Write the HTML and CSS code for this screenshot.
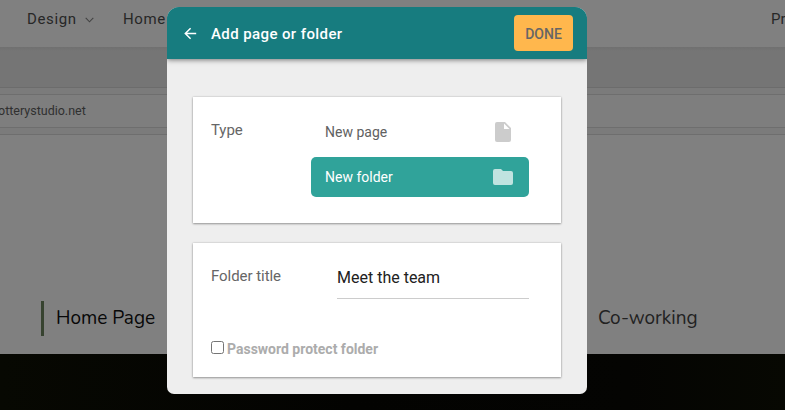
FILE: index.html
```html
<!DOCTYPE html>
<html lang="en">
<head>
<meta charset="utf-8">
<title>Add page or folder</title>
<link rel="stylesheet" href="styles.css">
</head>
<body>
<div class="site">
  <nav class="topbar">
    <span class="topbar-item design">Design
      <svg class="chevron" width="9" height="6" viewBox="0 0 9 6"><path d="M.7.9 4.5 4.8 8.3.9" fill="none" stroke="#424242" stroke-width="1.1"/></svg>
    </span>
    <span class="topbar-item">Home</span>
    <span class="topbar-item preview">Pr</span>
  </nav>
  <div class="toolbar"></div>
  <div class="address"><span>otterystudio.net</span></div>
  <div class="page">
    <span class="page-link current">Home Page</span>
    <span class="page-link coworking">Co-working</span>
  </div>
  <div class="hero"></div>
</div>
<section class="modal">
  <header class="modal-head">
    <svg class="back" width="13" height="13" viewBox="0 0 13 13"><path d="M12.2 6.500H1.300M6.600 1.200 1.300 6.500 6.600 11.800" fill="none" stroke="#fff" stroke-width="1.500"/></svg>
    <h1>Add page or folder</h1>
    <button class="done">DONE</button>
  </header>
  <div class="modal-body">
    <div class="card type-card">
      <span class="label">Type</span>
      <div class="options">
        <div class="option"><span>New page</span>
          <svg width="24" height="24" viewBox="0 0 24 24"><path fill="#ccc" fill-rule="evenodd" d="M6 2h8l6 6v12q0 2-2 2H6q-2 0-2-2V4q0-2 2-2zM13 3.500V9h5.500z"/></svg>
        </div>
        <div class="option selected"><span>New folder</span>
          <svg width="24" height="24" viewBox="0 0 24 24"><path fill="#c0e3e0" d="M10 4H4q-2 0-2 2v12q0 2 2 2h16q2 0 2-2V8q0-2-2-2h-8z"/></svg>
        </div>
      </div>
    </div>
    <div class="card title-card">
      <div class="field">
        <span class="label">Folder title</span>
        <span class="input">Meet the team</span>
      </div>
      <div class="protect"><span class="checkbox"></span><span class="protect-text">Password protect folder</span></div>
    </div>
  </div>
</section>
</body>
</html>
```
FILE: styles.css
```css
* { box-sizing: border-box; }
body { margin: 0; width: 785px; height: 410px; overflow: hidden; position: relative; font-family: Roboto, sans-serif; background: #808080; }
.site { overflow: hidden; }
.topbar { height: 47px; display: flex; align-items: center; padding: 0 0 9px 27px; background: #808080; color: #272727; font-size: 15px; letter-spacing: .65px; white-space: nowrap; }
.design { display: flex; align-items: center; width: 96px; }
.chevron { margin-left: 8px; margin-top: 1px; }
.preview { margin-left: auto; flex: none; width: 14px; letter-spacing: 0; }
.toolbar { height: 48px; background: linear-gradient(#707070 0, #757575 4px, #757575 40px, #6c6c6c 40px, #6c6c6c 41px, #7b7b7b 41px, #7b7b7b 47px, #6e6e6e 47px); }
.address { height: 40px; display: flex; align-items: flex-start; background: linear-gradient(#7e7e7e 32px, #6e6e6e 32px, #6e6e6e 33px, #7b7b7b 33px, #7b7b7b 39px, #6e6e6e 39px); color: #303030; font-size: 12.5px; line-height: 32px; }
.address span { margin-left: -2px; }
.page { height: 219px; display: flex; align-items: flex-end; padding: 0 0 18px 41px; background: #808080; font-family: Nunito, "Open Sans", sans-serif; font-size: 19px; line-height: 35px; white-space: nowrap; }
.current { width: 557px; border-left: 3px solid #374330; padding-left: 12px; color: #080808; }
.coworking { color: #222; }
.hero { height: 56px; background: linear-gradient(90deg, #070802, #030301 45%, #040402 80%, #070802); }
.modal { position: absolute; left: 167px; top: 7px; width: 420px; height: 387px; border-radius: 12px 12px 7px 7px; overflow: hidden; background: #eee; }
.modal-head { position: relative; height: 52px; background: #177c7f; display: flex; align-items: center; padding: 0 14px 0 17px; box-shadow: 0 1px 5px rgba(0,0,0,.5); }
.modal-head h1 { margin: 2px 0 0 14px; color: #fff; font-size: 15px; font-weight: 500; line-height: 20px; letter-spacing: .4px; }
.done { margin-left: auto; width: 59px; height: 36px; padding: 2px 0 0; border: 0; border-radius: 4px; background: #ffb74d; color: #666; font: 500 14px Roboto, sans-serif; }
.modal-body { padding: 38px 26px 0; }
.card { width: 368px; padding: 0 32px 0 18px; background: #fff; box-shadow: 0 0 2px rgba(0,0,0,.2), 0 1px 2px rgba(0,0,0,.32); }
.type-card { height: 126px; display: flex; justify-content: space-between; padding-top: 15px; }
.label { color: #666; font-size: 15px; line-height: 20px; letter-spacing: -.05px; }
.type-card .label { padding-top: 8px; }
.options { width: 218px; }
.option { height: 40px; padding: 0 14px; display: flex; align-items: center; justify-content: space-between; font-size: 14px; color: #616161; border-radius: 5px; }
.option:first-child { margin-bottom: 5px; }
.selected { background: #30a39a; color: #fff; }
.title-card { height: 134px; margin-top: 20px; padding-top: 19px; }
.field { display: flex; justify-content: space-between; }
.field .label { padding-top: 4px; }
.input { width: 192px; height: 37px; border-bottom: 1px solid #ccc; color: #212121; font-size: 16px; line-height: 31px; }
.protect { display: flex; align-items: center; margin-top: 42px; height: 16px; }
.checkbox { width: 13px; height: 13px; border: 1px solid #757575; border-radius: 2.5px; margin-right: 3px; margin-top: -3px; }
.protect-text { color: #acacac; font-size: 14px; font-weight: 700; line-height: 16px; }
```
